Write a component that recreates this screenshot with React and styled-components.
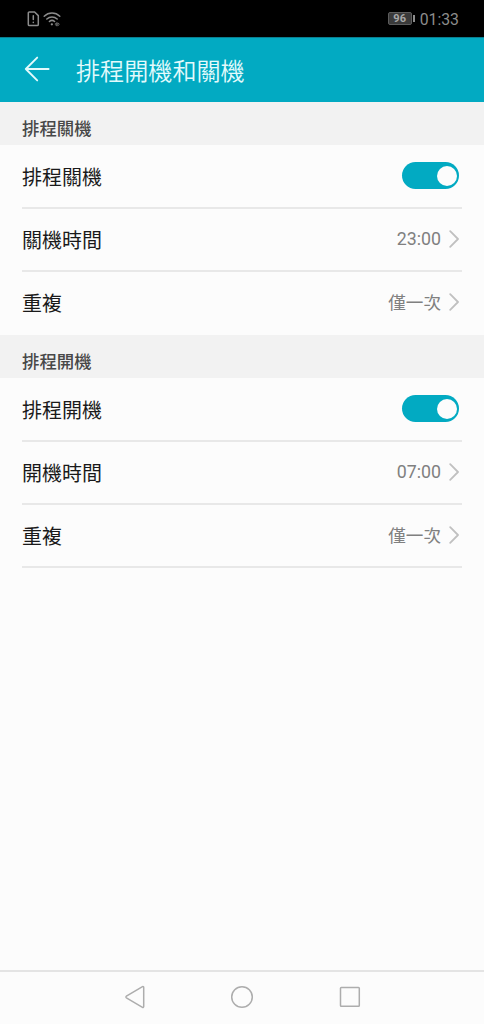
import { useState } from 'react';
import styled, { createGlobalStyle } from 'styled-components';

const GlobalStyle = createGlobalStyle`
  * {
    box-sizing: border-box;
  }

  body {
    margin: 0;
    background: #fcfcfc;
    font-family: Roboto, 'Noto Sans CJK TC', sans-serif;
  }
`;

const Screen = styled.div`
  display: flex;
  flex-direction: column;
  width: 484px;
  height: 1024px;
  background: #fcfcfc;
`;

const StatusBar = styled.div`
  display: flex;
  align-items: center;
  justify-content: space-between;
  height: 37px;
  padding: 0 25px 0 27px;
  background: #000;
  color: #8c8c8c;
`;

const StatusGroup = styled.div`
  display: flex;
  align-items: center;
  gap: ${({ $gap }) => $gap}px;
`;

const Battery = styled.div`
  display: flex;
  align-items: center;
  gap: 1px;

  &::after {
    content: '';
    width: 2px;
    height: 7px;
    background: #8c8c8c;
  }
`;

const BatteryLevel = styled.span`
  width: 24px;
  height: 13px;
  border: 1px solid #5c5c5c;
  border-radius: 2px;
  background: #3a3a3a;
  color: #a8a8a8;
  font-size: 11px;
  font-weight: 700;
  line-height: 11px;
  text-align: center;
`;

const Clock = styled.span`
  padding-top: 2px;
  font-size: 15.8px;
  line-height: 20px;
`;

const Header = styled.header`
  display: flex;
  align-items: center;
  height: 65px;
  padding-left: 24px;
  gap: 26px;
  background: #02aac2;
  border-top: 1px solid #0a7f90;
  color: #e3fafc;
`;

const BackButton = styled.button`
  display: flex;
  padding: 0 0 2px;
  border: 0;
  background: none;
  color: inherit;
`;

const Title = styled.h1`
  margin: 0;
  padding-top: 3px;
  font-size: 24.1px;
  font-weight: 350;
  line-height: 36px;
`;

const SectionTitle = styled.h2`
  display: flex;
  align-items: center;
  height: 43.4px;
  margin: 0;
  padding: 11px 22px 0;
  background: #f2f2f2;
  color: #484848;
  font-size: 17.4px;
  font-weight: 500;
  line-height: 26px;
`;

const List = styled.ul`
  margin: 0;
  padding: 0 22px;
  list-style: none;
`;

const Row = styled.li`
  display: flex;
  align-items: center;
  justify-content: space-between;
  height: 63.2px;
  padding-right: 3px;
  border-bottom: 2px solid ${({ $divider }) => ($divider ? '#e8e8e8' : 'transparent')};
`;

const Label = styled.span`
  padding-top: 4px;
  color: #1a1a1a;
  font-size: 20px;
  line-height: 30px;
`;

const Value = styled.span`
  display: flex;
  align-items: center;
  gap: 8px;
  color: #808080;
  font-size: 17.6px;
  line-height: 26px;
`;

const ValueText = styled.span`
  padding-top: ${({ $numeric }) => ($numeric ? 0 : 1)}px;
  font-size: ${({ $numeric }) => ($numeric ? 17.8 : 17.6)}px;
`;

const Switch = styled.button`
  display: flex;
  align-items: center;
  justify-content: ${({ $on }) => ($on ? 'flex-end' : 'flex-start')};
  width: 57px;
  height: 27px;
  padding: 0 2.5px;
  border: 0;
  border-radius: 14px;
  background: ${({ $on }) => ($on ? '#02aac2' : '#c8c8c8')};
`;

const Thumb = styled.span`
  width: 20px;
  height: 20px;
  border-radius: 50%;
  background: #fcfcfc;
`;

const NavBar = styled.nav`
  display: flex;
  justify-content: center;
  align-items: center;
  gap: 83.5px;
  height: 54px;
  margin-top: auto;
  padding-bottom: 2px;
  border-top: 2px solid #e4e4e4;
`;

const LineIcon = styled.svg`
  display: block;
  fill: none;
  stroke: ${({ $color }) => $color || 'currentColor'};
  stroke-width: ${({ $weight }) => $weight || 1.5};
  stroke-linecap: round;
  stroke-linejoin: round;
`;

function SimIcon() {
  return (
    <LineIcon width='13' height='16' viewBox='0 0 13 16'>
      <path d='M2.4 1h5.2l3.7 3.6v8.9a1.1 1.1 0 0 1-1.1 1.1H2.4a1.1 1.1 0 0 1-1.1-1.1V2.1A1.1 1.1 0 0 1 2.4 1Z' />
      <path d='M6.3 4.8v3.8M6.3 11.2v.2' />
    </LineIcon>
  );
}

function WifiIcon() {
  return (
    <LineIcon width='18' height='16' viewBox='0 0 18 16' $weight={1.5}>
      <path d='M1.2 5.2C5.7 .9 12.3 .9 16.8 5.2M3.8 8c3-2.7 7.4-2.7 10.4 0M6.4 10.5c1.5-1.3 3.7-1.3 5.2 0' />
      <path d='M8.8 13.3h.1' strokeWidth='2.2' />
      <path d='m13.3 12-1.4 1.3 1.4 1.3ZM15 12l1.4 1.3-1.4 1.3Z' strokeWidth='.7' />
    </LineIcon>
  );
}

function Chevron() {
  return (
    <LineIcon width='10' height='18' viewBox='0 0 10 18' $color='#c0c0c0' $weight={1.8}>
      <path d='m1.2 1.2 7.8 7.8-7.8 7.8' />
    </LineIcon>
  );
}

function ToggleRow({ label }) {
  const [enabled, setEnabled] = useState(true);

  return (
    <Row $divider>
      <Label>{label}</Label>
      <Switch
        type='button'
        role='switch'
        aria-checked={enabled}
        aria-label={label}
        $on={enabled}
        onClick={() => setEnabled(!enabled)}
      >
        <Thumb />
      </Switch>
    </Row>
  );
}

function ValueRow({ label, value, numeric = false, divider = true }) {
  return (
    <Row $divider={divider}>
      <Label>{label}</Label>
      <Value>
        <ValueText $numeric={numeric}>{value}</ValueText>
        <Chevron />
      </Value>
    </Row>
  );
}

export default function App() {
  return (
    <Screen>
      <GlobalStyle />
      <StatusBar>
        <StatusGroup $gap={3}>
          <SimIcon />
          <WifiIcon />
        </StatusGroup>
        <StatusGroup $gap={5}>
          <Battery>
            <BatteryLevel>96</BatteryLevel>
          </Battery>
          <Clock>01:33</Clock>
        </StatusGroup>
      </StatusBar>

      <Header>
        <BackButton type='button' aria-label='返回'>
          <LineIcon width='26' height='26' viewBox='0 0 26 26' $weight={1.9}>
            <path d='M13.2 1.6 1.8 13l11.4 11.4M1.8 13h22.8' />
          </LineIcon>
        </BackButton>
        <Title>排程開機和關機</Title>
      </Header>

      <SectionTitle>排程關機</SectionTitle>
      <List>
        <ToggleRow label='排程關機' />
        <ValueRow label='關機時間' value='23:00' numeric />
        <ValueRow label='重複' value='僅一次' divider={false} />
      </List>

      <SectionTitle>排程開機</SectionTitle>
      <List>
        <ToggleRow label='排程開機' />
        <ValueRow label='開機時間' value='07:00' numeric />
        <ValueRow label='重複' value='僅一次' />
      </List>

      <NavBar>
        <LineIcon width='24' height='24' viewBox='0 0 24 24' $color='#adadad'>
          <path d='M20.7 2.4v19.2a.8.8 0 0 1-1.2.7L3.4 12.9a1 1 0 0 1 0-1.7L19.5 1.7a.8.8 0 0 1 1.2.7Z' />
        </LineIcon>
        <LineIcon width='24' height='24' viewBox='0 0 24 24' $color='#adadad'>
          <circle cx='12' cy='12' r='10.3' />
        </LineIcon>
        <LineIcon width='24' height='24' viewBox='0 0 24 24' $color='#adadad'>
          <rect x='2.5' y='2.5' width='18.8' height='18.8' rx='.8' />
        </LineIcon>
      </NavBar>
    </Screen>
  );
}
